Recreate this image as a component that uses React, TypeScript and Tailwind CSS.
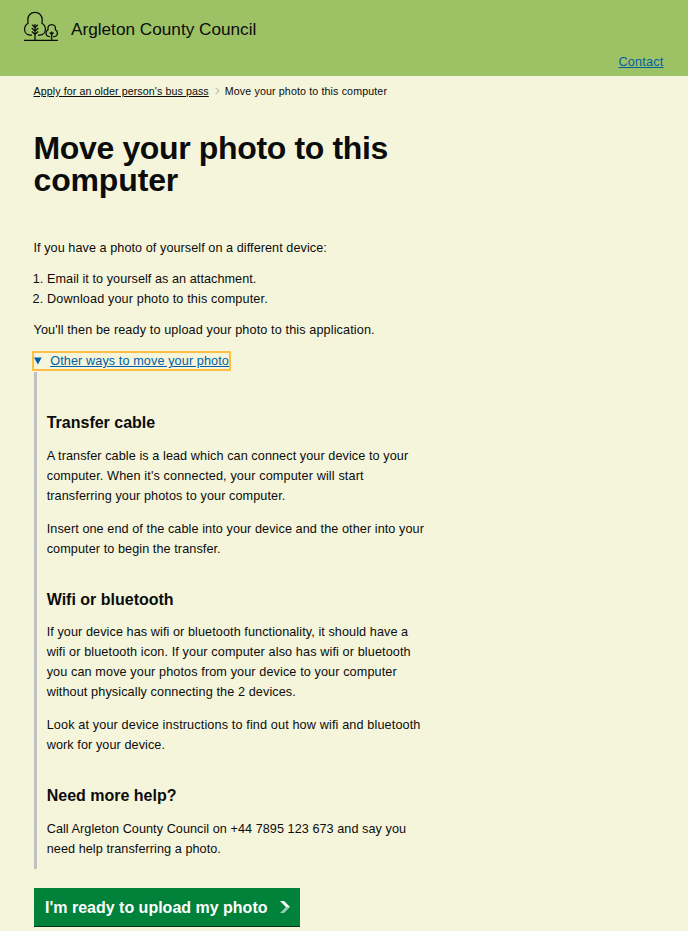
import type { ReactNode } from 'react';

function TreesLogo() {
  return (
    <svg width="36" height="32" viewBox="0 0 36 32" fill="none" stroke="#0b0c0c" strokeWidth="1.25" className="shrink-0">
      <path d="M1 29.4h34" />
      <path d="M9 24H7.300C3.800 24 1.600 21.300 1.600 18.200c0-2.900 1.500-4.800 3.500-6C4.900 11.100 4.800 10 4.800 8.800 4.800 4.500 7.700 1.400 12 1.400s7.200 3.100 7.200 7.400c0 1.200-.1 2.300-.3 3.400 2 1.200 3.500 3.100 3.500 6 0 3.100-2.200 5.800-5.700 5.800H15" />
      <path d="M12 13v16.400M9.200 13.800l2.800 2.800 2.800-2.800M8.800 17l3.200 3.200 3.200-3.200M8.800 20.500l3.200 3 3.200-3" />
      <path d="M27.300 25.500h-.8c-2.200 0-3.500-1.600-3.500-3.500 0-1.600.8-2.700 2-3.400-.5-2.900 1-5.100 3.700-5.100s4.200 2.200 3.700 5.100c1.200.7 2 1.800 2 3.400 0 1.900-1.300 3.500-3.500 3.500h-.8" />
      <path d="M28.700 20.500v8.900M26.800 21.500l1.900 2 1.900-2" />
    </svg>
  );
}

function Para({ children, className = '' }: { children: ReactNode; className?: string }) {
  return <p className={`whitespace-nowrap ${className}`}>{children}</p>;
}

function Line({ children, className = 'tracking-[.075px]' }: { children: ReactNode; className?: string }) {
  return <span className={`block ${className}`}>{children}</span>;
}

function Heading({ children, className = '' }: { children: ReactNode; className?: string }) {
  return <h2 className={`text-[16px] font-bold leading-5 ${className}`}>{children}</h2>;
}

export default function App() {
  return (
    <div className="h-[931px] overflow-hidden bg-[#f5f5dc] font-['Liberation_Sans',Arial,sans-serif] text-[12.67px] leading-5 text-[#0b0c0c]">
      <header className="flex h-19 flex-col justify-between bg-[#9dc265] pl-[23px] pr-[24.500px]">
        <div className="flex items-center gap-3 pt-[11px]">
          <TreesLogo />
          <span className="whitespace-nowrap pt-1 text-[17.200px] leading-6">Argleton County Council</span>
        </div>
        <a href="#" className="self-end pb-1 tracking-[.2px] text-[#005ea5] underline">Contact</a>
      </header>

      <main className="pl-[33.500px]">
        <nav className="flex h-[30px] items-center whitespace-nowrap text-[10.67px]">
          <a href="#" className="tracking-[.09px] underline">Apply for an older person's bus pass</a>
          <svg width="5" height="8" viewBox="0 0 5 8" fill="none" stroke="#c3c6b8" strokeWidth="1.300" className="ml-[6px] mr-[5px]">
            <path d="M.7.700 4 4 .7 7.300" />
          </svg>
          <span className="tracking-[.13px]">Move your photo to this computer</span>
        </nav>

        <h1 className="mt-[26px] whitespace-nowrap text-[32px] font-bold leading-8">
          <span className="block tracking-[-.36px]">Move your photo to this</span>
          <span className="block tracking-[-.15px]">computer</span>
        </h1>

        <p className="mt-[42px] tracking-[.055px]">If you have a photo of yourself on a different device:</p>
        <ol className="mt-[11px] list-decimal pl-[13.500px]">
          <li className="tracking-[.05px]">Email it to yourself as an attachment.</li>
          <li className="tracking-[.13px]">Download your photo to this computer.</li>
        </ol>
        <p className="mt-[11px] tracking-[.115px]">You'll then be ready to upload your photo to this application.</p>

        <div className="-ml-[1.500px] mt-[11px] flex h-5 w-[199px] items-center border-2 border-[#ffbf47] text-[#005ea5]">
          <svg width="8" height="8" viewBox="0 0 8 8" fill="currentColor" className="mr-[8.500px]"><path d="M0 .5h8L4 7.500z" /></svg>
          <span className="whitespace-nowrap tracking-[.1px] underline">Other ways to move your photo</span>
        </div>

        <section className="mt-px ml-[.5px] h-[497px] border-l-[3px] border-[#bfc1c3] pl-[9.700px]">
          <Heading className="pt-[41px]">Transfer cable</Heading>
          <Para className="mt-[13px]">
            <Line>A transfer cable is a lead which can connect your device to your</Line>
            <Line className="tracking-[.13px]">computer. When it's connected, your computer will start</Line>
            <Line className="tracking-[.09px]">transferring your photos to your computer.</Line>
          </Para>
          <Para className="mt-[13px]">
            <Line>Insert one end of the cable into your device and the other into your</Line>
            <Line>computer to begin the transfer.</Line>
          </Para>
          <Heading className="mt-[31px]">Wifi or bluetooth</Heading>
          <Para className="mt-[12px]">
            <Line>If your device has wifi or bluetooth functionality, it should have a</Line>
            <Line className="tracking-[.11px]">wifi or bluetooth icon. If your computer also has wifi or bluetooth</Line>
            <Line className="tracking-[.105px]">you can move your photos from your device to your computer</Line>
            <Line className="tracking-[.1px]">without physically connecting the 2 devices.</Line>
          </Para>
          <Para className="mt-[13px]">
            <Line className="tracking-[.13px]">Look at your device instructions to find out how wifi and bluetooth</Line>
            <Line>work for your device.</Line>
          </Para>
          <Heading className="mt-[31px]">Need more help?</Heading>
          <Para className="mt-[13px]">
            <Line className="tracking-[.05px]">Call Argleton County Council on +44 7895 123 673 and say you</Line>
            <Line className="tracking-[.06px]">need help transferring a photo.</Line>
          </Para>
        </section>

        <button className="ml-[.5px] mt-[19px] flex h-[39px] w-[266px] items-center whitespace-nowrap border-b border-[#003618] bg-[#00823b] pl-[11px] text-[16px] font-bold text-white">
          <span className="pt-px">I'm ready to upload my photo</span>
          <svg width="10" height="12" viewBox="0 0 11 12" preserveAspectRatio="none" className="ml-[12.500px]">
            <path d="M0 0h4.500L11 6H6.500z" fill="#fff" />
            <path d="M0 12h4.500L11 6H6.500z" fill="#99cdb1" />
          </svg>
        </button>
      </main>
    </div>
  );
}
